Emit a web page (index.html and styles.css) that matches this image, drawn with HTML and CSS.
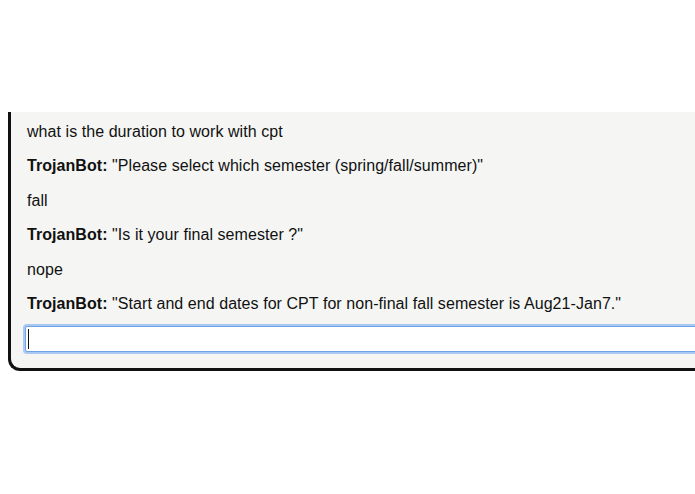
FILE: index.html
```html
<!DOCTYPE html>
<html>
<head>
<meta charset="utf-8">
<link rel="stylesheet" href="styles.css">
</head>
<body>
<div class="chat">
  <p>what is the duration to work with cpt</p>
  <p><b>TrojanBot:</b> "Please select which semester (spring/fall/summer)"</p>
  <p>fall</p>
  <p><b>TrojanBot:</b> "Is it your final semester ?"</p>
  <p>nope</p>
  <p><b>TrojanBot:</b> "Start and end dates for CPT for non-final fall semester is Aug21-Jan7."</p>
  <div class="input"><span class="caret"></span></div>
</div>
</body>
</html>
```
FILE: styles.css
```css
html, body {
  margin: 0;
  padding: 0;
  background: #ffffff;
  overflow: hidden;
}
body {
  width: 695px;
  height: 494px;
  padding: 112px 0 0 8px;
  box-sizing: border-box;
  font-family: "Liberation Sans", Arial, sans-serif;
  font-size: 16px;
  letter-spacing: 0.06px;
  color: #111;
}
.chat {
  width: 760px;
  background: #f5f6f4;
  border-left: 3px solid #111;
  border-bottom: 3px solid #111;
  border-bottom-left-radius: 12px;
  padding: 11px 0 16px 16px;
  box-sizing: border-box;
}
.chat p {
  margin: 0 0 16px 0;
  line-height: 18.4px;
}
.input {
  margin-left: -2px;
  margin-top: -3px;
  height: 24px;
  background: #fff;
  border: 1px solid #6fa3e6;
  box-shadow: 0 0 0 2px #a9c9f2;
  border-radius: 2px;
  position: relative;
}
.caret {
  position: absolute;
  left: 2px;
  top: 2px;
  width: 1px;
  height: 20px;
  background: #111;
}
```
